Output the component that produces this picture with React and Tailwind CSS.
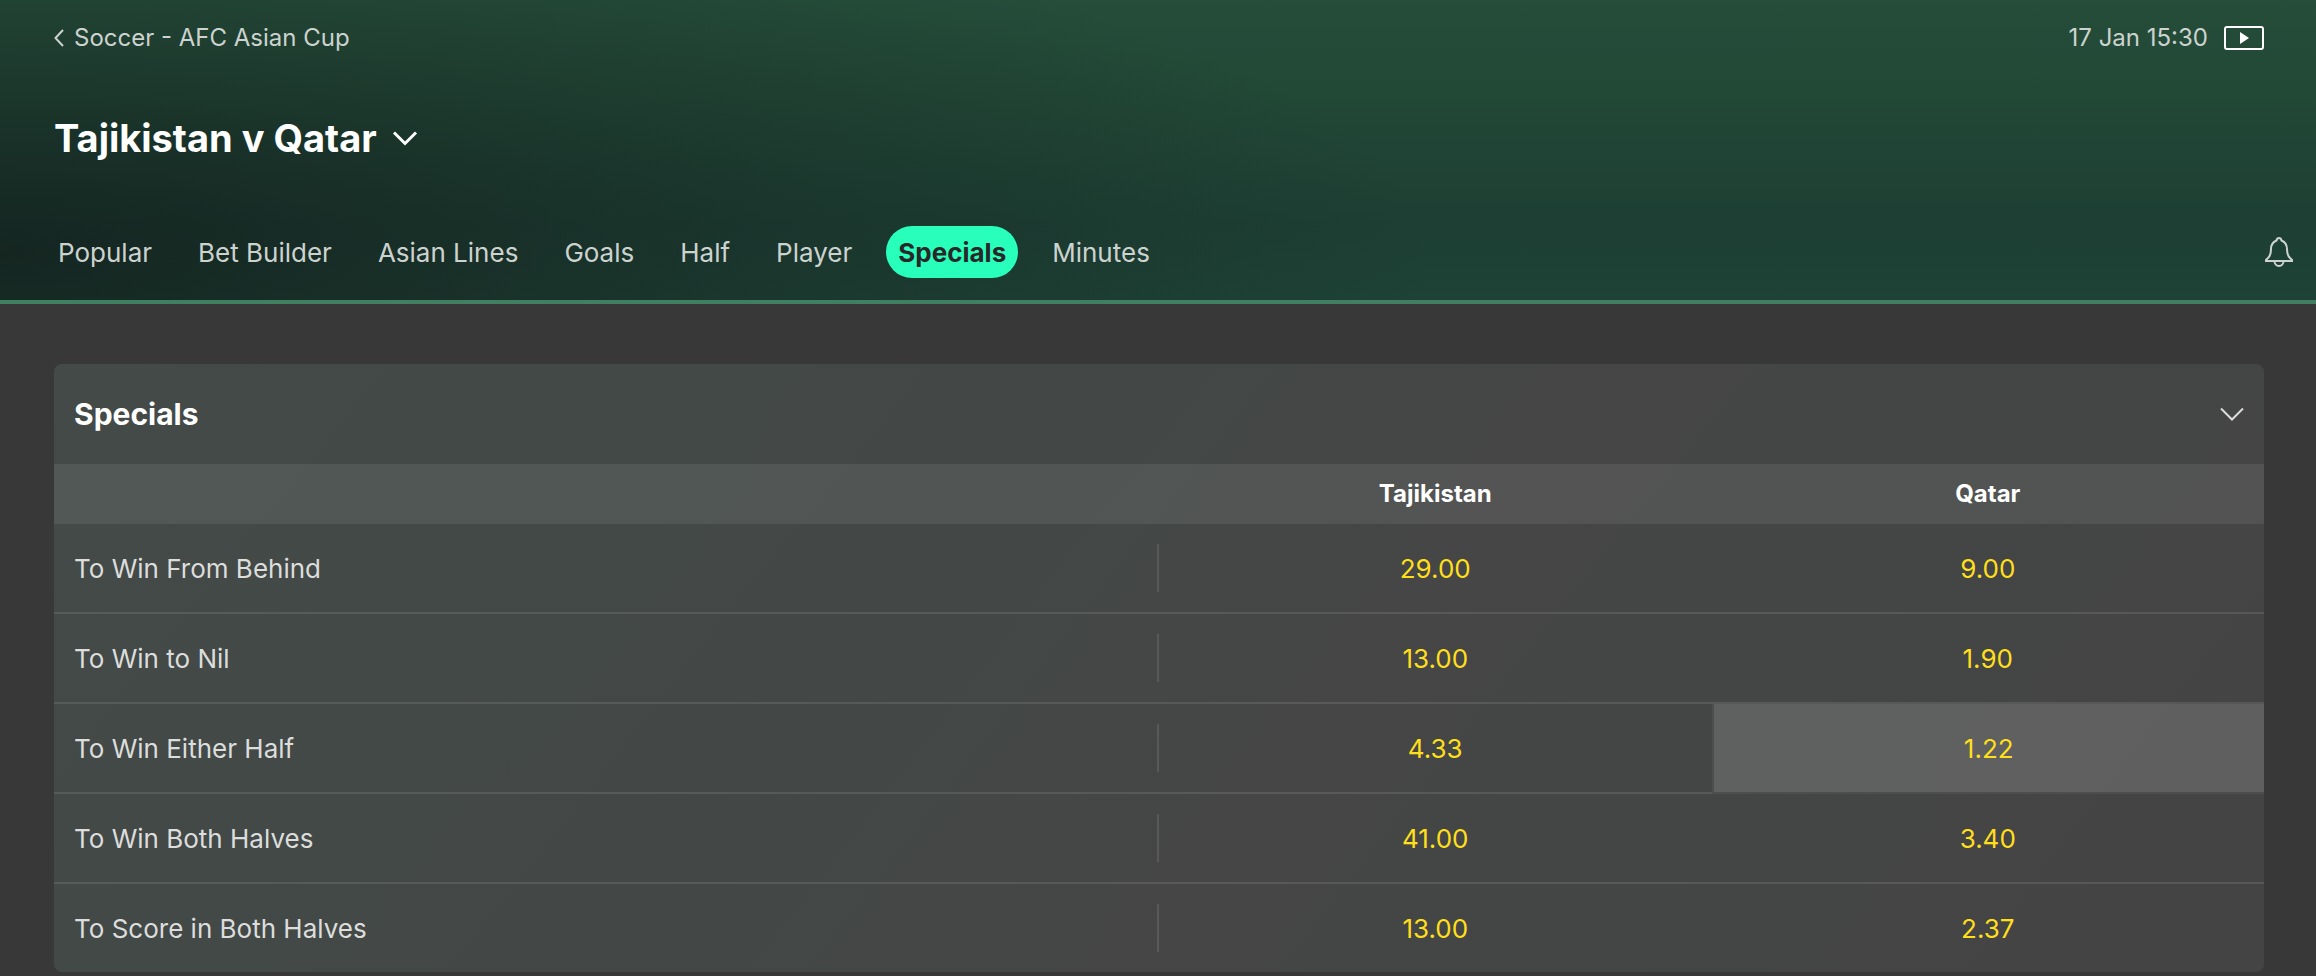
import React, { useState } from 'react';
import clsx from 'clsx';

const tabs = ['Popular', 'Bet Builder', 'Asian Lines', 'Goals', 'Half', 'Player', 'Specials', 'Minutes'];

const teams = ['Tajikistan', 'Qatar'];

const markets = [
  { name: 'To Win From Behind', odds: ['29.00', '9.00'] },
  { name: 'To Win to Nil', odds: ['13.00', '1.90'] },
  { name: 'To Win Either Half', odds: ['4.33', '1.22'] },
  { name: 'To Win Both Halves', odds: ['41.00', '3.40'] },
  { name: 'To Score in Both Halves', odds: ['13.00', '2.37'] },
];

function Chevron({ className, strokeWidth }) {
  return (
    <svg viewBox="0 0 24 14" fill="none" stroke="currentColor" strokeWidth={strokeWidth} className={className} aria-hidden="true">
      <path d="M1 1.500 12 12.500 23 1.500" />
    </svg>
  );
}

function Header({ activeTab, onTabChange }) {
  return (
    <header className="relative border-b-4 border-[#417f61] bg-[linear-gradient(to_bottom,#254d3a,#224836_30%,#1d3f34_75%,#1e4236)]">
      {/* Dark fade coming in from the left edge */}
      <div className="absolute inset-0 bg-[radial-gradient(ellipse_62%_125%_at_0%_85%,#14231fe6_0%,#14231f99_30%,#14231f4d_60%,#14231f00_100%)]" />

      <div className="relative h-[300px] pr-[52px] pl-[54px]">
        <div className="flex h-[76px] items-center justify-between text-2xl text-[#ccd3cf]">
          <a href="#" className="flex items-center gap-[10px]">
            <svg viewBox="0 0 10 18" fill="none" stroke="currentColor" strokeWidth="2" className="h-[18px] w-[10px]" aria-hidden="true">
              <path d="M9 1 1.500 9 9 17" />
            </svg>
            Soccer - AFC Asian Cup
          </a>
          <div className="flex items-center gap-4">
            <span>17 Jan 15:30</span>
            <button type="button" aria-label="Watch live stream">
              <svg viewBox="0 0 40 24" fill="none" className="h-6 w-10">
                <rect x="1" y="1" width="38" height="22" rx="2" stroke="#fff" strokeWidth="2" />
                <path d="M16 6v12l9-6z" fill="#fff" />
              </svg>
            </button>
          </div>
        </div>

        <div className="flex h-[124px] items-center">
          <button type="button" className="flex items-center gap-4 text-white">
            <h1 className="text-[38px] font-bold">Tajikistan v Qatar</h1>
            <Chevron strokeWidth="3" className="h-[14px] w-6 overflow-visible" />
          </button>
        </div>

        <div className="-mr-[29px] -ml-2 flex h-[104px] items-center justify-between">
          <nav className="flex items-center gap-[22px]">
            {tabs.map((tab) => (
              <button
                key={tab}
                type="button"
                onClick={() => onTabChange(tab)}
                className={clsx(
                  'h-[52px] rounded-full px-3 text-[26px]',
                  tab === activeTab ? 'bg-[#28ffbb] font-bold text-[#282828]' : 'text-[#ccd3cf]'
                )}
              >
                {tab}
              </button>
            ))}
          </nav>
          <button type="button" aria-label="Notifications" className="text-[#ccd3cf]">
            <svg viewBox="0 0 28 30" fill="none" stroke="currentColor" strokeWidth="2" className="h-[30px] w-7">
              <path d="M11.500 3.500C11.800 2 12.700 1 14 1s2.200 1 2.500 2.500C20 5 22 8 22 12c0 5 .8 7 3 9l2 2v1H1v-1l2-2c2.200-2 3-4 3-9 0-4 2-7 5.500-8.500Z" />
              <path d="M9.500 24c0 3 2 5 4.500 5s4.500-2 4.500-5" />
            </svg>
          </button>
        </div>
      </div>
    </header>
  );
}

function MarketTable() {
  return (
    <table className="w-full table-fixed border-separate border-spacing-0">
      <thead>
        <tr className="h-[60px] bg-white/8 text-2xl text-white">
          <td className="w-1/2" />
          {teams.map((team) => (
            <th key={team} scope="col" className="w-1/4 p-0 font-bold">{team}</th>
          ))}
        </tr>
      </thead>
      <tbody className="text-[26px]">
        {markets.map((market, i) => {
          const line = i < markets.length - 1 && 'border-b-2';
          return (
            <tr key={market.name}>
              <th scope="row" className={clsx('border-white/10 py-5 pr-0 pl-5 text-left font-normal text-[#dcdddc]', line)}>
                <div className="flex h-12 items-center border-r-2 border-white/10">{market.name}</div>
              </th>
              {market.odds.map((odd, j) => {
                const highlighted = odd === '1.22';
                return (
                  <td key={j} className={clsx('p-0', line, highlighted ? 'border-white/5' : 'border-white/10')}>
                    <button
                      type="button"
                      className={clsx(
                        'h-[88px] w-full text-[#ffdf1b]',
                        highlighted && 'border-l-2 border-white/5 bg-white/15 bg-clip-padding'
                      )}
                    >
                      {odd}
                    </button>
                  </td>
                );
              })}
            </tr>
          );
        })}
      </tbody>
    </table>
  );
}

function App() {
  const [activeTab, setActiveTab] = useState('Specials');
  const [open, setOpen] = useState(true);

  return (
    <div className="min-h-screen bg-[#383838] font-['Inter',sans-serif]">
      <Header activeTab={activeTab} onTabChange={setActiveTab} />

      <main className="pt-[60px] pr-[52px] pl-[54px]">
        <section className="overflow-hidden rounded-lg bg-[linear-gradient(128deg,#434a47,#434846_40%,#454645_58%,#434645_75%,#454444_92%)]">
          <button
            type="button"
            aria-expanded={open}
            onClick={() => setOpen(!open)}
            className="flex h-[100px] w-full items-center justify-between px-5 text-white"
          >
            <h2 className="text-[30px] font-bold">Specials</h2>
            <Chevron strokeWidth="2" className="h-[14px] w-6 overflow-visible text-[#dcdddc]" />
          </button>
          {open && <MarketTable />}
        </section>
      </main>
    </div>
  );
}

export default App;
